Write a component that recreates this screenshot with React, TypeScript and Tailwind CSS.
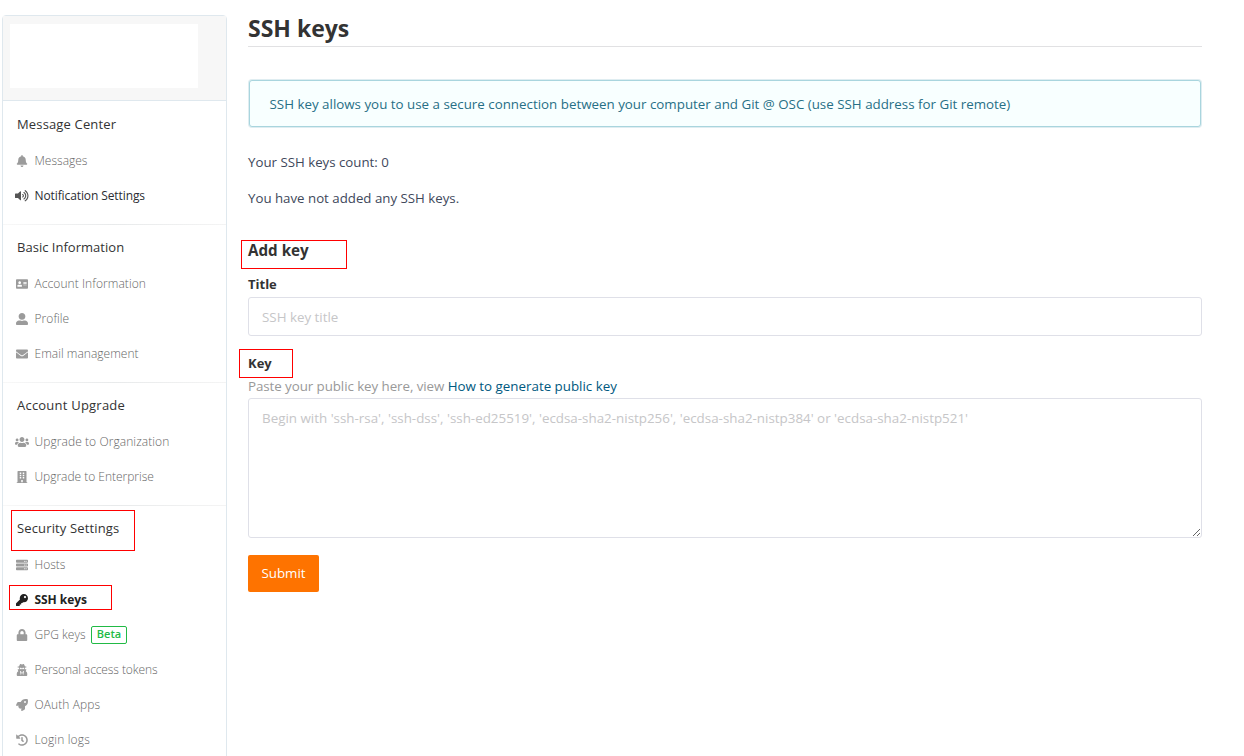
import {
  FaBell, FaVolumeUp, FaAddressCard, FaUserAlt, FaEnvelope, FaUsers, FaBuilding,
  FaServer, FaKey, FaLock, FaUserSecret, FaRocket, FaHistory,
} from "react-icons/fa";
import type { IconType } from "react-icons";

type Item = { label: string; icon: IconType; tone?: "dark" | "active"; beta?: boolean; track: string; size?: string };
type Section = { title: string; track: string; items: Item[] };

const sections: Section[] = [
  {
    title: "Message Center", track: "tracking-[0.15px]",
    items: [
      { label: "Messages", icon: FaBell, track: "" },
      { label: "Notification Settings", icon: FaVolumeUp, tone: "dark", track: "tracking-[-0.1px]", size: "text-[13.5px]" },
    ],
  },
  {
    title: "Basic Information", track: "tracking-[0.02px]",
    items: [
      { label: "Account Information", icon: FaAddressCard, track: "tracking-[0.07px]" },
      { label: "Profile", icon: FaUserAlt, track: "tracking-[0.05px]" },
      { label: "Email management", icon: FaEnvelope, track: "tracking-[0.03px]" },
    ],
  },
  {
    title: "Account Upgrade", track: "tracking-[0.22px]",
    items: [
      { label: "Upgrade to Organization", icon: FaUsers, track: "tracking-[0.08px]", size: "text-[14px]" },
      { label: "Upgrade to Enterprise", icon: FaBuilding, track: "tracking-[-0.02px]" },
    ],
  },
  {
    title: "Security Settings", track: "tracking-[0.14px]",
    items: [
      { label: "Hosts", icon: FaServer, track: "" },
      { label: "SSH keys", icon: FaKey, tone: "active", track: "tracking-[-0.05px]" },
      { label: "GPG keys", icon: FaLock, beta: true, track: "" },
      { label: "Personal access tokens", icon: FaUserSecret, track: "tracking-[-0.09px]" },
      { label: "OAuth Apps", icon: FaRocket, track: "tracking-[0.08px]" },
      { label: "Login logs", icon: FaHistory, track: "tracking-[0.15px]" },
    ],
  },
];

function NavItem({ item }: { item: Item }) {
  const Icon = item.icon;
  const tone =
    item.tone === "dark" ? "text-[#2b2d33]" : item.tone === "active" ? "font-bold text-[#222]" : "font-light text-[#666]";
  const iconTone = item.tone === "dark" ? "text-[#555]" : item.tone === "active" ? "text-[#222]" : "text-[#9b9b9b]";
  return (
    <li className={`flex h-[35px] items-center text-[12px] ${tone}`}>
      <span className={`flex w-[14px] justify-center ${item.size ?? "text-[12px]"} ${iconTone}`}>
        <Icon className="shrink-0" />
      </span>
      <span className={`ml-[5.5px] whitespace-nowrap ${item.track}`}>{item.label}</span>
      {item.beta && (
        <span className="ml-[5.5px] flex h-[18px] w-[36px] items-center justify-center rounded-[2px] border border-[#21ba45] text-[11px] font-semibold text-[#21ba45]">
          Beta
        </span>
      )}
    </li>
  );
}

export default function App() {
  return (
    <div className="relative flex h-[756px] w-[1244px] overflow-hidden bg-white font-['Open_Sans',sans-serif] text-[13.35px] text-[#40485b]">
      <aside className="ml-[2px] mt-[15px] h-[800px] w-[225px] shrink-0 rounded-t-[4px] border border-[#dfe8ee]">
        <div className="h-[85px] border-b border-[#dfe8ee] bg-[#f7f7f7] pl-[7px] pt-[8px]">
          <div className="h-[64px] w-[188px] bg-white" />
        </div>
        <nav className="pt-px">
          {sections.map((s, i) => (
            <section key={s.title}>
              {i > 0 && <div className="h-px bg-linear-to-r from-[#f8f8f8] via-[#e8eaeb] to-[#f4f4f4]" />}
              <h2 className="flex h-[41px] items-start pl-[14px] pt-[13px] text-[13px] leading-[19px] text-[#333]">
                <span className={`whitespace-nowrap ${s.track}`}>{s.title}</span>
              </h2>
              <ul className="pb-[11px] pl-[12px]">
                {s.items.map((it) => (
                  <NavItem key={it.label} item={it} />
                ))}
              </ul>
            </section>
          ))}
        </nav>
      </aside>
      <main className="ml-[21px] w-[954px] pt-[12px]">
        <h1 className="h-[35px] border-b border-[#e1e1e3] text-[23px] font-bold leading-[33px] text-[#333]">SSH keys</h1>
        <div className="ml-px mt-[33px] flex h-[47px] w-[952px] items-center rounded-[3px] border border-[#a9d5de] bg-[#f8ffff] pl-[19.5px] pt-px text-[#276f86] shadow-[0_0_0_1px_#dfedf1]">
          SSH key allows you to use a secure connection between your computer and Git @ OSC (use SSH address for Git remote)
        </div>
        <p className="mt-[25px] text-[13.28px] leading-[20px]">Your SSH keys count: 0</p>
        <p className="mt-[16px] text-[13.28px] leading-[20px]">You have not added any SSH keys.</p>
        <h2 className="mt-[31px] text-[15.2px] font-bold leading-[22px] text-[#333]">Add key</h2>
        <form className="flex flex-col items-start">
          <label className="mt-[13px] text-[13px] font-bold leading-[20px] text-[#333]">Title</label>
          <input placeholder="SSH key title" className="mt-[3px] h-[39px] w-full rounded-[3px] border border-[#dfe0e8] px-[13px] placeholder:text-[#c6c6c8]" />
          <label className="mt-[17px] text-[13px] font-bold leading-[20px] text-[#333]">Key</label>
          <p className="mt-[3px] leading-[20px] text-[#999]">
            <span className="tracking-[-0.07px]">Paste your public key here, view </span>
            <a className="text-[#005980]">How to generate public key</a>
          </p>
          <textarea
            placeholder="Begin with 'ssh-rsa', 'ssh-dss', 'ssh-ed25519', 'ecdsa-sha2-nistp256', 'ecdsa-sha2-nistp384' or 'ecdsa-sha2-nistp521'"
            className="mt-[2px] h-[140px] w-full resize rounded-[3px] border border-[#dfe0e8] px-[13px] py-[9px] text-[13.38px] leading-[20px] placeholder:text-[#c6c6c8]"
          />
          <button type="button" className="mt-[17px] h-[37px] w-[71px] rounded-[2px] bg-[#fe7300] text-white">Submit</button>
        </form>
      </main>
      <div className="absolute left-[241px] top-[240px] h-[29px] w-[106px] border border-[#f00]" />
      <div className="absolute left-[239px] top-[349px] h-[29px] w-[54px] border border-[#f00]" />
      <div className="absolute left-[11px] top-[510px] h-[41px] w-[124px] border border-[#f00]" />
      <div className="absolute left-[9px] top-[585px] h-[25px] w-[103px] border border-[#f00]" />
    </div>
  );
}
